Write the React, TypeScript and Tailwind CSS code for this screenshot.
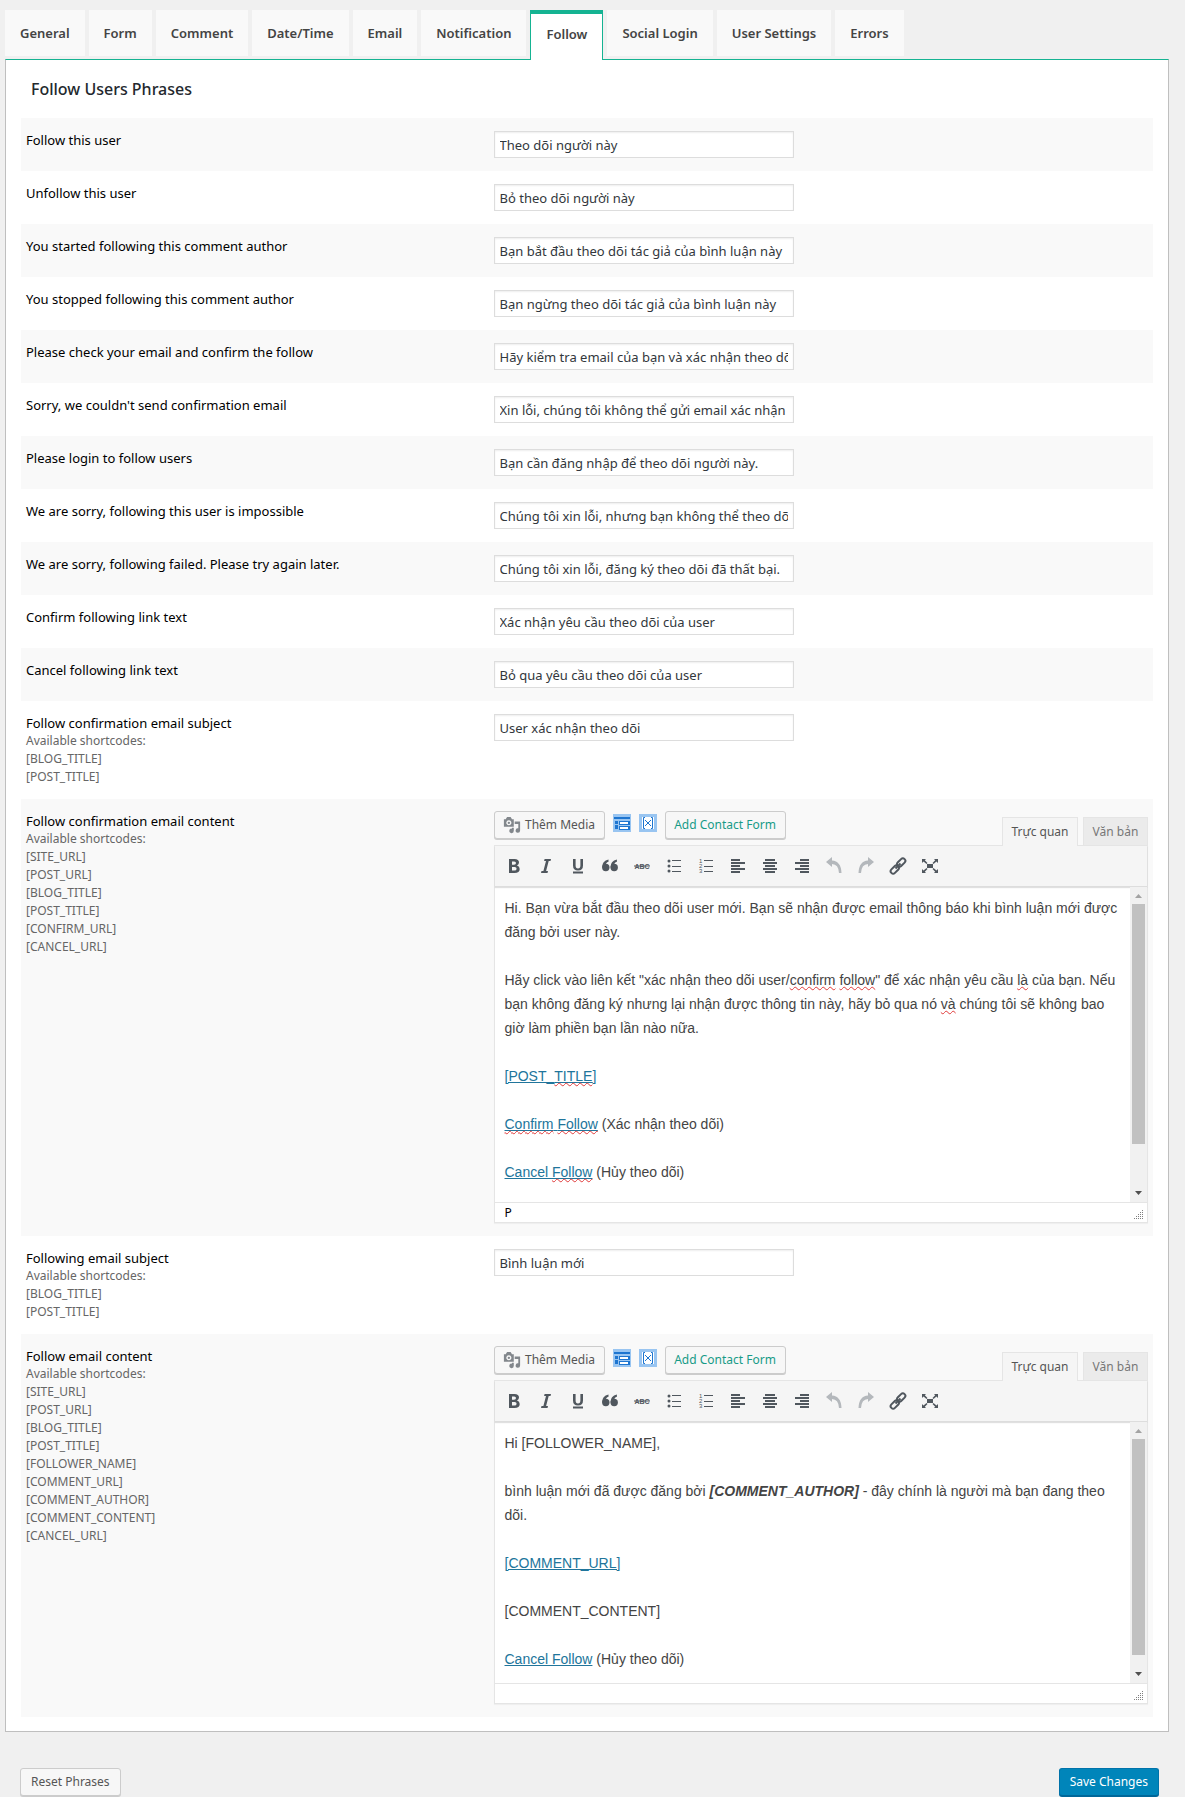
import { useState, type ReactNode } from 'react';

const tabs = ['General', 'Form', 'Comment', 'Date/Time', 'Email', 'Notification', 'Follow', 'Social Login', 'User Settings', 'Errors'];

const phrases = [
  { label: 'Follow this user', value: 'Theo dõi người này' },
  { label: 'Unfollow this user', value: 'Bỏ theo dõi người này' },
  { label: 'You started following this comment author', value: 'Bạn bắt đầu theo dõi tác giả của bình luận này' },
  { label: 'You stopped following this comment author', value: 'Bạn ngừng theo dõi tác giả của bình luận này' },
  { label: 'Please check your email and confirm the follow', value: 'Hãy kiểm tra email của bạn và xác nhận theo dõi' },
  { label: "Sorry, we couldn't send confirmation email", value: 'Xin lỗi, chúng tôi không thể gửi email xác nhận' },
  { label: 'Please login to follow users', value: 'Bạn cần đăng nhập để theo dõi người này.' },
  { label: 'We are sorry, following this user is impossible', value: 'Chúng tôi xin lỗi, nhưng bạn không thể theo dõi' },
  { label: 'We are sorry, following failed. Please try again later.', value: 'Chúng tôi xin lỗi, đăng ký theo dõi đã thất bại.' },
  { label: 'Confirm following link text', value: 'Xác nhận yêu cầu theo dõi của user' },
  { label: 'Cancel following link text', value: 'Bỏ qua yêu cầu theo dõi của user' },
];

type RowProps = {
  label: string;
  id: string;
  codes?: string[];
  children: ReactNode;
};

function Row({ label, id, codes, children }: RowProps) {
  return (
    <div className="flex px-[5px] py-[13px] odd:bg-[#f9f9f9]">
      <div className="w-5/12 shrink-0">
        <label htmlFor={id} id={`${id}-label`} className="block text-[13px] leading-[18px] text-black">
          {label}
        </label>
        {codes && (
          <div className="text-xs leading-[18px] text-[#666]">
            <p>Available shortcodes:</p>
            {codes.map((code) => (
              <p key={code}>[{code}]</p>
            ))}
          </div>
        )}
      </div>
      <div className="min-w-0 flex-1">{children}</div>
    </div>
  );
}

function PhraseInput({ id, value }: { id: string; value: string }) {
  return (
    <input
      id={id}
      type="text"
      defaultValue={value}
      className="block h-[27px] w-[300px] border border-[#ddd] bg-white px-[5px] text-[13px] text-[#32373c] shadow-[inset_0_1px_2px_rgba(0,0,0,0.07)]"
    />
  );
}

const lines = (rows: number[][]) => rows.map(([x, y, w]) => <rect key={`${x}-${y}`} x={x} y={y} width={w} height="2" />);

const toolbar: { name: string; muted?: boolean; icon: ReactNode }[] = [
  {
    name: 'Bold',
    icon: <path fillRule="evenodd" d="M5 3h5.500q4.500 0 4.500 3.500q0 2-2 3q2.700.7 2.700 3.500q0 4-5.200 4H5zM8 5.400v3.300h2q2 0 2-1.700t-2-1.600zM8 11v3.600h2.300q2.300 0 2.300-1.900T10.300 11z" />,
  },
  { name: 'Italic', icon: <path d="M8.600 3H15l-.5 2h-1.800l-2.600 10h1.900l-.5 2H5l.5-2h1.900L10 5H8.100z" /> },
  {
    name: 'Underline',
    icon: <path d="M5 3h2.600v6.500q0 3 2.400 3t2.400-3V3H15v6.500q0 5-5 5t-5-5zM5 15.500h10v2H5z" />,
  },
  {
    name: 'Blockquote',
    icon: (
      <>
        <circle cx="5.800" cy="11.500" r="3.700" />
        <circle cx="14.200" cy="11.500" r="3.700" />
        <path d="M2.100 11.500Q2 5 8.500 3.600v2.200Q5.600 6.800 5.600 9.500zM10.500 11.500Q10.400 5 16.900 3.600v2.200Q14 6.800 14 9.500z" />
      </>
    ),
  },
  {
    name: 'Strikethrough',
    icon: (
      <>
        <text x="10" y="12.500" textAnchor="middle" fontSize="7" fontWeight="700" fontFamily="Liberation Sans, sans-serif">
          ABC
        </text>
        <rect x="2" y="9.500" width="16" height="1" />
      </>
    ),
  },
  {
    name: 'Bulleted list',
    icon: (
      <>
        <circle cx="5" cy="5" r="1.500" />
        <circle cx="5" cy="10" r="1.500" />
        <circle cx="5" cy="15" r="1.500" />
        <path d="M8 4h9v1H8zM8 10h9v1H8zM8 15h9v1H8z" />
      </>
    ),
  },
  {
    name: 'Numbered list',
    icon: (
      <>
        <g fontSize="6" fontFamily="Liberation Sans, sans-serif">
          <text x="3" y="7">1</text>
          <text x="3" y="12">2</text>
          <text x="3" y="17">3</text>
        </g>
        <path d="M8 4h9v1H8zM8 10h9v1H8zM8 15h9v1H8z" />
      </>
    ),
  },
  { name: 'Align left', icon: lines([[3, 3, 9], [3, 6, 14], [3, 9, 9], [3, 12, 14], [3, 15, 9]]) },
  { name: 'Align center', icon: lines([[5, 3, 10], [3, 6, 14], [5, 9, 10], [3, 12, 14], [5, 15, 10]]) },
  { name: 'Align right', icon: lines([[8, 3, 9], [3, 6, 14], [8, 9, 9], [3, 12, 14], [8, 15, 9]]) },
  {
    name: 'Undo',
    muted: true,
    icon: <path d="M8 1v3.500Q17 5 17.500 17H15Q14.500 8.200 8 8v3L2 6z" />,
  },
  {
    name: 'Redo',
    muted: true,
    icon: <path d="M12 1v3.500Q3 5 2.500 17H5Q5.500 8.200 12 8v3l6-5z" />,
  },
  {
    name: 'Insert link',
    icon: (
      <g fill="none" stroke="currentColor" strokeWidth="2">
        <rect x="8.500" y="4" width="9.500" height="5" rx="2.500" transform="rotate(-45 13.200 6.500)" />
        <rect x="2" y="11" width="9.500" height="5" rx="2.500" transform="rotate(-45 6.800 13.500)" />
        <path d="M7.500 12.500l5-5" />
      </g>
    ),
  },
  {
    name: 'Fullscreen',
    icon: (
      <>
        <path d="M7 8h6v4H7z" />
        <path d="M2 3h4L4.800 4.200L7.500 7L6.500 8L3.500 5.500L2 7zM18 3h-4l1.200 1.200L12.500 7l1 1l3-2.500L18 7zM2 17h4l-1.200-1.200L7.500 13l-1-1l-3 2.500L2 13zM18 17h-4l1.200-1.200L12.500 13l1-1l3 2.500L18 13z" />
      </>
    ),
  },
];

function MediaIcon() {
  return (
    <svg viewBox="0 0 20 20" className="size-[18px] fill-[#82878c]" aria-hidden="true">
      <path fillRule="evenodd" d="M1 3.500h2L4.500 1h4L10 3.500h2V12H1zM6.500 4.800a2.800 2.800 0 1 0 .01 0z" />
      <circle cx="6.500" cy="7.600" r="1.300" />
      <path d="M13 6h6v10a2.500 2.500 0 1 1-2-2.400V9h-4zM10 13h2v3.500a2.500 2.500 0 1 1-2-2.400z" />
    </svg>
  );
}

const smallButton =
  'flex h-7 items-center rounded-[3px] border border-[#ccc] bg-[#f7f7f7] text-xs shadow-[0_1px_0_#ccc] whitespace-nowrap';

type EditorProps = {
  id: string;
  status?: string;
  bodyClass: string;
  thumbClass: string;
  children: ReactNode;
};

function Editor({ id, status, bodyClass, thumbClass, children }: EditorProps) {
  const [mode, setMode] = useState('visual');

  return (
    <div>
      <div className="flex items-start justify-between">
        <div className="-mt-px flex gap-2">
          <button type="button" className={`${smallButton} w-[111px] justify-center gap-1 text-[#555]`}>
            <MediaIcon />
            Thêm Media
          </button>
          <button type="button" aria-label="Insert layout" className="mt-[3px] size-[18px] bg-[#99c5f1]">
            <svg viewBox="0 0 18 18" className="size-[18px]" aria-hidden="true">
              <path fill="#1d75d0" d="M1 3h16v2H1zM2 7h3v3H2zM2 11h3v4H2zM6 7h11v4H6zM6 12h11v4H6z" />
              <path fill="#fff" d="M7 8h8v2H7zM7 13h8v2H7z" />
            </svg>
          </button>
          <button type="button" aria-label="Insert shortcode" className="mt-[3px] size-[18px] bg-[#99c5f1]">
            <svg viewBox="0 0 18 18" className="size-[18px]" aria-hidden="true">
              <path fill="#fff" d="M3 3h12v12H3z" />
              <path fill="none" stroke="#1d75d0" d="M6 3.500H4.500v11H6M12 3.500h1.500v11H12M6 6l6 6M12 6l-6 6" />
            </svg>
          </button>
          <button type="button" className={`${smallButton} w-[121px] justify-center text-[#179b87]`}>
            Add Contact Form
          </button>
        </div>
        <div className="mt-[5px] -mb-px flex gap-[5px] text-xs">
          <button
            type="button"
            onClick={() => setMode('visual')}
            className="relative z-10 h-[29px] w-[76px] border border-b-0 border-[#e5e5e5] bg-[#f5f5f5] text-[#555]"
            aria-pressed={mode === 'visual'}
          >
            Trực quan
          </button>
          <button
            type="button"
            onClick={() => setMode('text')}
            className="h-[29px] w-[65px] border border-[#e5e5e5] bg-[#ebebeb] text-[#777]"
            aria-pressed={mode === 'text'}
          >
            Văn bản
          </button>
        </div>
      </div>

      <div className="border border-[#e5e5e5] bg-white shadow-[0_1px_1px_rgba(0,0,0,0.04)]">
        <div className="flex h-[41px] items-center gap-1 border-b border-[#ddd] bg-[#f5f5f5] pl-[5px] shadow-[0_1px_1px_rgba(0,0,0,0.12)]">
          {toolbar.map((tool) => (
            <button
              key={tool.name}
              type="button"
              title={tool.name}
              className={`flex size-7 items-center justify-center ${tool.muted ? 'text-[#b4b8bc]' : 'text-[#50575e]'}`}
            >
              <svg viewBox="0 0 20 20" className="size-5" fill="currentColor" aria-hidden="true">
                {tool.icon}
              </svg>
            </button>
          ))}
        </div>
        <div className={`flex ${bodyClass}`}>
          <div
            id={id}
            role="textbox"
            aria-multiline="true"
            aria-labelledby={`${id}-label`}
            contentEditable
            suppressContentEditableWarning
            spellCheck={false}
            className="min-w-0 flex-1 space-y-6 overflow-hidden pt-[9px] pl-[10px] font-['Liberation_Sans',Arial,sans-serif] text-sm leading-6 text-[#444] outline-none"
          >
            {children}
          </div>
          <div className="flex w-[17px] shrink-0 flex-col items-center bg-[#f1f1f1]" aria-hidden="true">
            <svg viewBox="0 0 17 17" className="size-[17px]">
              <path fill="#a3a3a3" d="M5 11l3.500-4L12 11z" />
            </svg>
            <div className={`w-[13px] bg-[#c1c1c1] ${thumbClass}`} />
            <div className="flex-1" />
            <svg viewBox="0 0 17 17" className="size-[17px]">
              <path fill="#505050" d="M5 6l3.500 4L12 6z" />
            </svg>
          </div>
        </div>
        <div className="flex h-5 items-center justify-between border-t border-[#e5e5e5] pr-[3px] pl-[10px] text-xs text-black">
          <span>{status}</span>
          <svg viewBox="0 0 10 10" className="mt-[5px] size-[10px]" fill="#808080" aria-hidden="true">
            <path d="M8 0h1v1H8zM6 2h1v1H6zM8 2h1v1H8zM4 4h1v1H4zM6 4h1v1H6zM8 4h1v1H8zM2 6h1v1H2zM4 6h1v1H4zM6 6h1v1H6zM8 6h1v1H8zM0 8h1v1H0zM2 8h1v1H2zM4 8h1v1H4zM6 8h1v1H6zM8 8h1v1H8z" />
          </svg>
        </div>
      </div>
    </div>
  );
}

const link = 'text-[#21759b] underline';

// word flagged by the spell checker
function Misspelt({ children }: { children: ReactNode }) {
  return <span className="underline decoration-[#e03a3a] decoration-wavy decoration-1">{children}</span>;
}

export default function App() {
  const [active, setActive] = useState('Follow');

  return (
    <div className="min-h-screen bg-[#f0f0f0] pt-[10px] pr-4 pl-[5px] font-['Noto_Sans','Open_Sans',sans-serif]">
      <nav className="-mb-px flex items-start gap-1">
        {tabs.map((tab) => (
          <button
            key={tab}
            type="button"
            onClick={() => setActive(tab)}
            className={
              tab === active
                ? 'h-[50px] border border-t-4 border-b-0 border-[#15b392] bg-white px-[15px] pb-1 text-[13px] font-semibold text-[#444]'
                : 'h-[46px] bg-[#f9f9f9] px-[15px] pt-px text-[13px] font-semibold text-[#444]'
            }
          >
            {tab}
          </button>
        ))}
      </nav>

      <form>
        <div className="border border-t-[#15b392] border-r-[#bfbfbf] border-b-[#bfbfbf] border-l-[#bfbfbf] bg-white px-[15px] pb-[14px]">
          <h2 className="px-[10px] pt-[17px] pb-[17px] text-base leading-6 font-medium text-[#23282d]">Follow Users Phrases</h2>

          <div>
            {phrases.map((phrase, i) => (
              <Row key={phrase.label} id={`phrase-${i}`} label={phrase.label}>
                <PhraseInput id={`phrase-${i}`} value={phrase.value} />
              </Row>
            ))}

            <Row id="confirm-subject" label="Follow confirmation email subject" codes={['BLOG_TITLE', 'POST_TITLE']}>
              <PhraseInput id="confirm-subject" value="User xác nhận theo dõi" />
            </Row>

            <Row
              id="confirm-content"
              label="Follow confirmation email content"
              codes={['SITE_URL', 'POST_URL', 'BLOG_TITLE', 'POST_TITLE', 'CONFIRM_URL', 'CANCEL_URL']}
            >
              <Editor id="confirm-content" status="P" bodyClass="h-[315px]" thumbClass="h-[240px]">
                <p>
                  Hi. Bạn vừa bắt đầu theo dõi user mới. Bạn sẽ nhận được email thông báo khi bình luận mới được
                  <br />
                  đăng bởi user này.
                </p>
                <p>
                  Hãy click vào liên kết "xác nhận theo dõi user/<Misspelt>confirm</Misspelt> <Misspelt>follow</Misspelt>" để xác nhận yêu
                  cầu <Misspelt>là</Misspelt> của bạn. Nếu
                  <br />
                  bạn không đăng ký nhưng lại nhận được thông tin này, hãy bỏ qua nó <Misspelt>và</Misspelt> chúng tôi sẽ không bao
                  <br />
                  giờ làm phiền bạn lần nào nữa.
                </p>
                <p>
                  <a href="#post" className={link}>
                    [POST_<Misspelt>TITLE</Misspelt>]
                  </a>
                </p>
                <p>
                  <a href="#confirm" className={link}>
                    <Misspelt>Confirm</Misspelt> <Misspelt>Follow</Misspelt>
                  </a>{' '}
                  (Xác nhận theo dõi)
                </p>
                <p>
                  <a href="#cancel" className={link}>
                    Cancel <Misspelt>Follow</Misspelt>
                  </a>{' '}
                  (Hủy theo dõi)
                </p>
              </Editor>
            </Row>

            <Row id="follow-subject" label="Following email subject" codes={['BLOG_TITLE', 'POST_TITLE']}>
              <PhraseInput id="follow-subject" value="Bình luận mới" />
            </Row>

            <Row
              id="follow-content"
              label="Follow email content"
              codes={[
                'SITE_URL',
                'POST_URL',
                'BLOG_TITLE',
                'POST_TITLE',
                'FOLLOWER_NAME',
                'COMMENT_URL',
                'COMMENT_AUTHOR',
                'COMMENT_CONTENT',
                'CANCEL_URL',
              ]}
            >
              <Editor id="follow-content" bodyClass="h-[261px]" thumbClass="h-[216px]">
                <p>Hi [FOLLOWER_NAME],</p>
                <p>
                  bình luận mới đã được đăng bởi{' '}
                  <strong>
                    <em>[COMMENT_AUTHOR]</em>
                  </strong>{' '}
                  - đây chính là người mà bạn đang theo
                  <br />
                  dõi.
                </p>
                <p>
                  <a href="#comment" className={link}>[COMMENT_URL]</a>
                </p>
                <p>[COMMENT_CONTENT]</p>
                <p>
                  <a href="#cancel" className={link}>Cancel Follow</a> (Hủy theo dõi)
                </p>
              </Editor>
            </Row>
          </div>
        </div>

        <div className="flex justify-between pt-9 pr-[10px] pb-px pl-[15px]">
          <button type="button" className={`${smallButton} px-[10px] text-[#555]`}>
            Reset Phrases
          </button>
          <button
            type="button"
            className="h-7 rounded-[3px] border border-[#0073aa] border-b-[#006799] bg-[#0085ba] px-[10px] text-xs text-white shadow-[0_1px_0_#006799]"
          >
            Save Changes
          </button>
        </div>
      </form>
    </div>
  );
}
